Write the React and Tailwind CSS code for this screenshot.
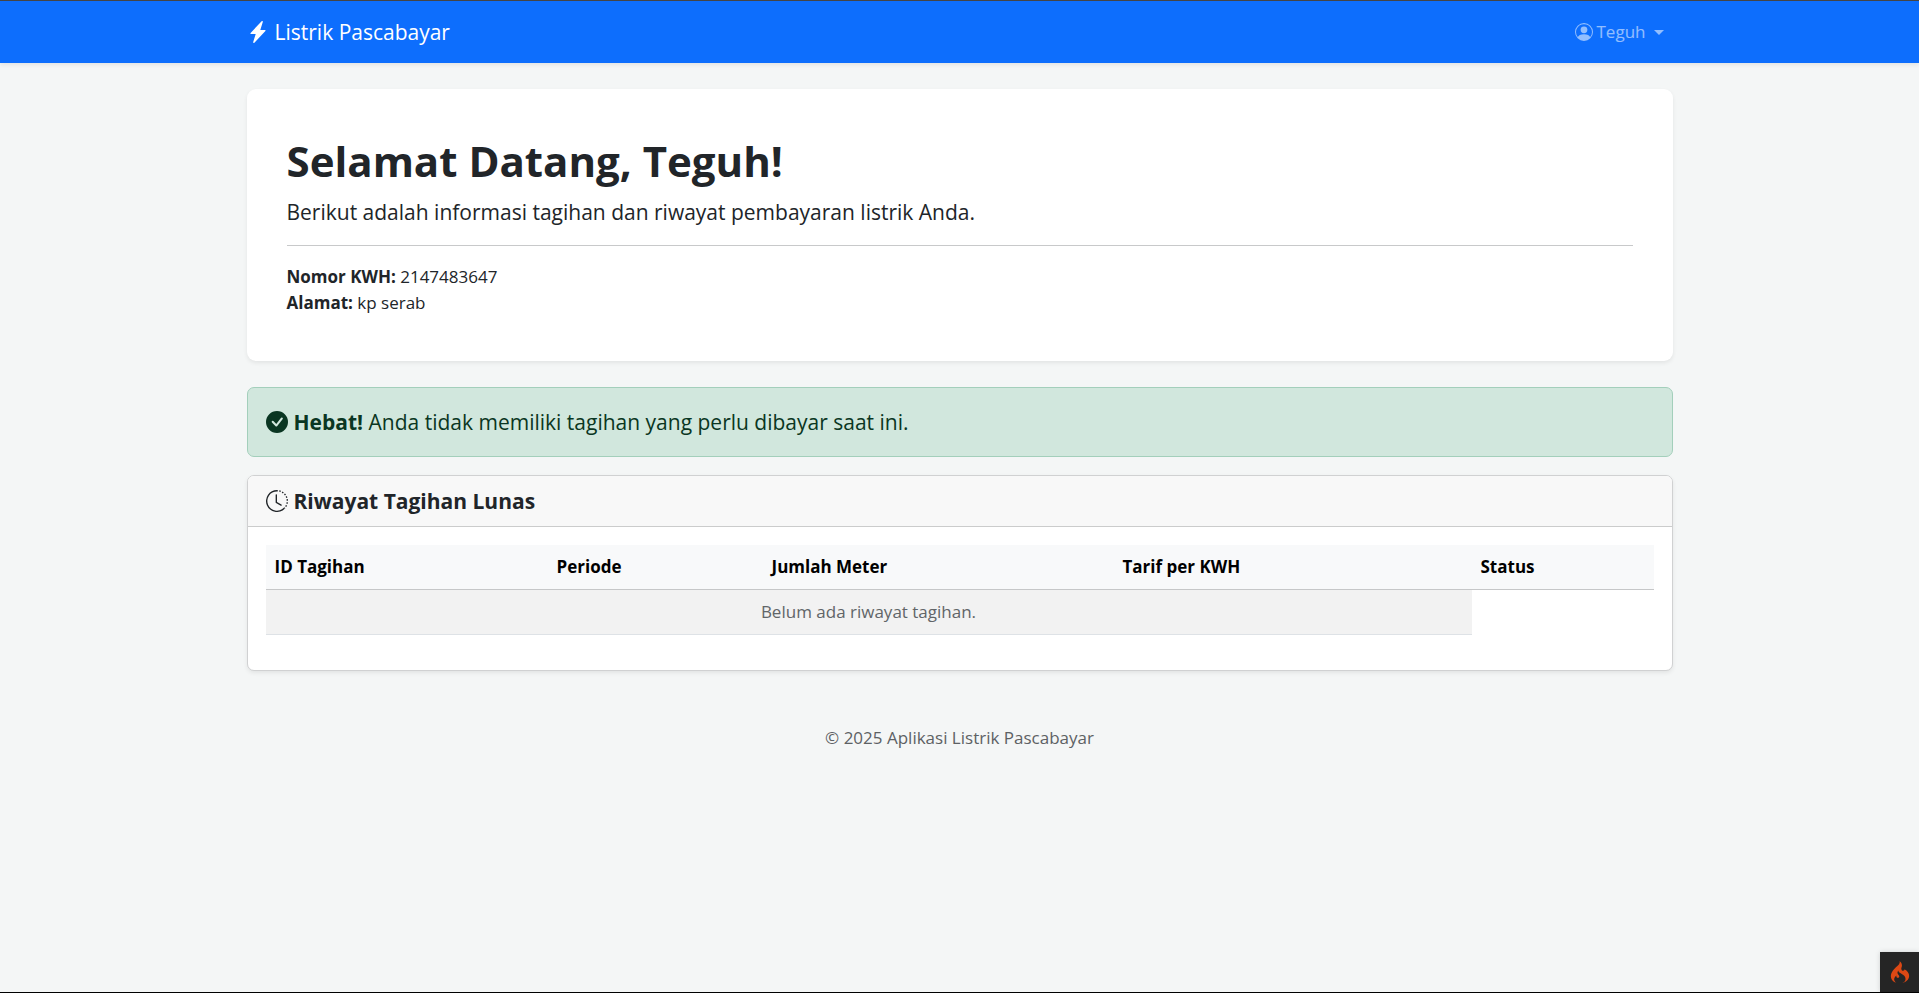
import { BsLightningChargeFill, BsPersonCircle, BsCheckCircleFill, BsClockHistory } from "react-icons/bs";
import { SiCodeigniter } from "react-icons/si";

const columns = [
  { title: "ID Tagihan", width: "w-[282px]" },
  { title: "Periode", width: "w-[215px]" },
  { title: "Jumlah Meter", width: "w-[351px]" },
  { title: "Tarif per KWH", width: "w-[358px]" },
  { title: "Status", width: "w-[182px]" },
];

function Navbar() {
  return (
    <nav className="border-t border-[#444] bg-[#0d6efd] shadow-[0_2px_4px_rgba(0,0,0,0.075)]">
      <div className="mx-auto flex h-[62px] max-w-[1452px] items-center justify-between px-[13px]">
        <a href="#" className="flex items-center gap-[6px] text-[21px] text-white">
          <BsLightningChargeFill className="size-[22px]" aria-hidden="true" />
          <span className="pt-[2px]">Listrik Pascabayar</span>
        </a>
        <button type="button" className="flex items-center px-[9px] text-[17px] text-white/55">
          <BsPersonCircle className="mr-1 size-[18px]" aria-hidden="true" />
          Teguh
          <span className="ml-2 border-x-5 border-t-5 border-x-transparent border-t-current" />
        </button>
      </div>
    </nav>
  );
}

function Welcome() {
  return (
    <section className="rounded-[9px] bg-white p-10 pb-[45px] shadow-[0_2px_4px_rgba(0,0,0,0.075)]">
      <h1 className="mb-1 text-[42px] leading-[64px] font-bold">Selamat Datang, Teguh!</h1>
      <p className="text-[21px] leading-[30px]">
        Berikut adalah informasi tagihan dan riwayat pembayaran listrik Anda.
      </p>
      <hr className="my-[18px] border-[#c8c9ca]" />
      <p className="leading-[26px]">
        <strong>Nomor KWH:</strong> 2147483647
        <br />
        <strong>Alamat:</strong> kp serab
      </p>
    </section>
  );
}

function PaidAlert() {
  return (
    <div
      role="alert"
      className="mt-[26px] flex h-[70px] items-center gap-[6px] rounded-[7px] border border-[#a3cfbb] bg-[#d1e7dd] px-[18px] text-[21px] text-[#0a3622]"
    >
      <BsCheckCircleFill className="size-[22px]" aria-hidden="true" />
      <p className="pt-[2px]">
        <strong>Hebat!</strong> Anda tidak memiliki tagihan yang perlu dibayar saat ini.
      </p>
    </div>
  );
}

function History() {
  return (
    <section className="mt-[18px] rounded-[7px] border border-[#d0d1d2] bg-white shadow-[0_2px_4px_rgba(0,0,0,0.075)]">
      <header className="flex h-[51px] items-center gap-[6px] rounded-t-[6px] border-b border-[#cbcccc] bg-[#f8f8f8] px-[18px]">
        <BsClockHistory className="size-[22px]" aria-hidden="true" />
        <h2 className="pt-[2px] text-[21px] font-bold">Riwayat Tagihan Lunas</h2>
      </header>
      <div className="px-[18px] pt-[18px] pb-[35px]">
        <table className="w-full table-fixed border-collapse">
          <thead>
            <tr className="h-[44px] border-b border-[#c6c7c8] bg-[#f8f9fa] text-left text-black">
              {columns.map((c) => (
                <th key={c.title} scope="col" className={c.width + " px-[9px] font-bold"}>
                  {c.title}
                </th>
              ))}
            </tr>
          </thead>
          <tbody>
            <tr className="h-[45px]">
              <td colSpan={4} className="border-b border-[#dee2e6] bg-[#f2f2f2] px-[9px] text-center text-[#616568]">
                Belum ada riwayat tagihan.
              </td>
            </tr>
          </tbody>
        </table>
      </div>
    </section>
  );
}

export default function App() {
  return (
    <div className="flex min-h-screen flex-col border-b border-black bg-[#f4f6f6] font-['Open_Sans','Noto_Sans',sans-serif] text-[17px] text-[#212529]">
      <Navbar />
      <main className="mx-auto w-full max-w-[1452px] px-[13px] pt-[26px]">
        <Welcome />
        <PaidAlert />
        <History />
      </main>
      <footer className="pt-[54px] pb-6 text-center leading-[26px] text-[#5d6164]">© 2025 Aplikasi Listrik Pascabayar</footer>
      <button
        type="button"
        aria-label="Debug"
        className="fixed right-0 bottom-px flex h-10 w-[39px] items-center justify-center bg-[#252525] text-[#dd4814] shadow-[0_0_5px_rgba(0,0,0,0.15)]"
      >
        <SiCodeigniter className="size-[22px]" aria-hidden="true" />
      </button>
    </div>
  );
}
